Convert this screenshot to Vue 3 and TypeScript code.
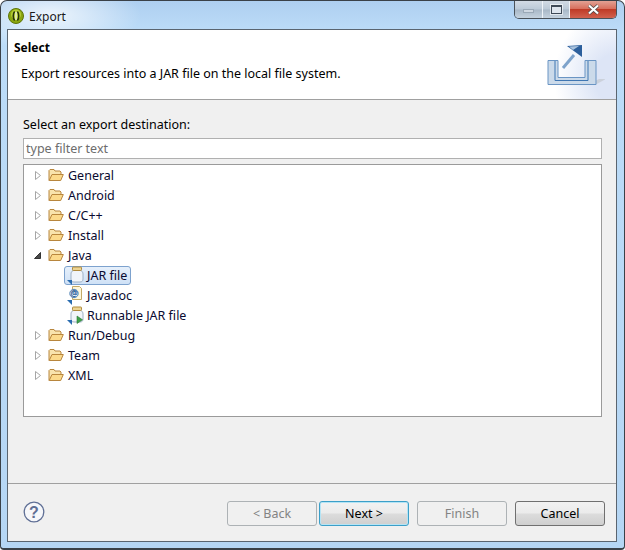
<template>
  <div class="window">
    <div class="titlebar">
      <div class="title">
        <svg class="app-icon" width="16" height="16" viewBox="0 0 16 16">
          <circle cx="8" cy="8" r="7.500" fill="#8aa60f" stroke="#5d7408" />
          <circle cx="8" cy="6.500" r="5" fill="#b5cc35" />
          <path d="M6.600 3.500C4.800 5.500 4.800 10.500 6.600 12.500M9.400 3.500C11.200 5.500 11.200 10.500 9.400 12.500" fill="none" stroke="#24300a" stroke-width="1.500" />
          <path d="M8 4v8" stroke="#f4f7d8" stroke-width="1.400" />
        </svg>
        <span>Export</span>
      </div>
      <div class="controls">
        <div class="ctl ctl-min"><span class="min-glyph"></span></div>
        <div class="ctl ctl-max"><span class="max-glyph"></span></div>
        <div class="ctl ctl-close">
          <svg width="13" height="11" viewBox="0 0 13 11">
            <path d="M2 1.500l9 8M11 1.500l-9 8" stroke="#4a4a4a" stroke-width="3.600" />
            <path d="M2 1.500l9 8M11 1.500l-9 8" stroke="#fff" stroke-width="2.200" />
          </svg>
        </div>
      </div>
    </div>

    <div class="client">
      <header class="banner">
        <div class="banner-text">
          <h1>Select</h1>
          <p>Export resources into a JAR file on the local file system.</p>
        </div>
        <div class="banner-art">
          <svg width="58" height="46" viewBox="0 0 58 46">
            <path d="M40 42l12-6h7l-11 6z" fill="#c3c9d0" opacity="0.7" />
            <path d="M1 17.500h10v17h27v-17h11v24H1z" fill="#cbdaea" stroke="#6a95c4" />
            <path d="M8 18v19.500h33V18" fill="none" stroke="#3f76b2" />
            <path d="M16 25L27 12" stroke="#7ea3cb" stroke-width="3" />
            <path d="M20 3l15-1v12z" fill="#2c5f9c" />
            <path d="M22 3.500l10-.5-6 4z" fill="#a9c3de" />
          </svg>
        </div>
      </header>

      <main class="body">
        <label class="dest-label">Select an export destination:</label>
        <input class="filter" type="text" placeholder="type filter text" />
        <ul class="tree">
          <li v-for="row in rows" :key="row.label" class="row" :class="{ child: row.kind !== 'folder' }">
            <template v-if="row.kind === 'folder'">
              <svg class="twisty" width="9" height="11" viewBox="0 0 9 11">
                <path v-if="row.open" d="M1.500 8.500h6v-6z" fill="#4a4a4a" stroke="#333" />
                <path v-else d="M2.500 1.500v8l5-4z" fill="#fff" stroke="#a6a6a6" />
              </svg>
              <svg class="icon folder" width="16" height="14" viewBox="0 0 16 14">
                <path d="M1 12.500V2.500l1-1h4l1 1.500h5l1 1v2" fill="#f8e3ad" stroke="#b8863e" />
                <path d="M1.200 12.500L4 6.500h11.300l-2.600 6z" fill="#fbd98b" stroke="#b8863e" />
              </svg>
              <span class="label">{{ row.label }}</span>
            </template>
            <div v-else class="item" :class="{ selected: row.selected }">
              <svg class="icon leaf" width="18" height="20" viewBox="0 0 18 20">
                <template v-if="row.kind === 'javadoc'">
                  <path d="M6.500 1.500h7l2 2v11h-9z" fill="#fdf7dc" stroke="#c4aa66" />
                  <circle cx="8" cy="8.500" r="4.200" fill="#eef5fb" stroke="#4a7fb5" />
                  <text x="8" y="11" class="at">@</text>
                </template>
                <template v-else>
                  <path d="M7 5.500c-1.500 1-2 2-2 3.500v5c0 2 1 3 3 3h6c2 0 3-1 3-3V9c0-1.500-.5-2.500-2-3.500z" fill="#f1f5fa" stroke="#9fb2c6" />
                  <rect x="6.500" y="2" width="9" height="3.500" rx="0.800" fill="#ecd492" stroke="#b08a3c" />
                  <path v-if="row.kind === 'runnable'" d="M11 11v7.500l5.500-3.700z" fill="#3da24a" stroke="#2d7a37" stroke-width="0.600" />
                </template>
                <path d="M1 15h5v5z" fill="#2a6cb0" />
              </svg>
              <span class="label">{{ row.label }}</span>
            </div>
          </li>
        </ul>
      </main>

      <footer class="footer">
        <svg class="help" width="22" height="22" viewBox="0 0 22 22">
          <circle cx="11" cy="11" r="9.800" fill="#f6f7fa" stroke="#5f6f95" stroke-width="1.300" />
          <text x="11" y="16.500" class="q">?</text>
        </svg>
        <div class="buttons">
          <button class="btn" disabled>&lt; Back</button>
          <button class="btn primary">Next &gt;</button>
          <button class="btn finish" disabled>Finish</button>
          <button class="btn cancel">Cancel</button>
        </div>
      </footer>
    </div>
  </div>
</template>

<script setup lang="ts">
interface Row {
  label: string
  kind: 'folder' | 'jar' | 'javadoc' | 'runnable'
  open?: boolean
  selected?: boolean
}

const rows: Row[] = [
  { label: 'General', kind: 'folder' },
  { label: 'Android', kind: 'folder' },
  { label: 'C/C++', kind: 'folder' },
  { label: 'Install', kind: 'folder' },
  { label: 'Java', kind: 'folder', open: true },
  { label: 'JAR file', kind: 'jar', selected: true },
  { label: 'Javadoc', kind: 'javadoc' },
  { label: 'Runnable JAR file', kind: 'runnable' },
  { label: 'Run/Debug', kind: 'folder' },
  { label: 'Team', kind: 'folder' },
  { label: 'XML', kind: 'folder' }
]
</script>

<style>
html,
body {
  margin: 0;
  background: #fff;
}
</style>

<style scoped>
.window {
  box-sizing: border-box;
  width: 625px;
  height: 550px;
  display: flex;
  flex-direction: column;
  padding: 0 7px 6px 6px;
  border: 1px solid #3a4148;
  border-bottom-width: 2px;
  border-radius: 7px 7px 4px 4px;
  background:
    radial-gradient(ellipse 90px 36px at 50px 14px, rgba(255, 255, 255, 0.75), rgba(255, 255, 255, 0) 100%),
    linear-gradient(180deg, #aecff0 0, #bcdcf8 30px, #b5d6f4 100%);
  font-family: "Noto Sans", sans-serif;
  font-size: 12.5px;
  color: #000;
  overflow: hidden;
}

.titlebar {
  height: 28px;
  flex: none;
  display: flex;
  justify-content: space-between;
  align-items: flex-start;
}

.title {
  display: flex;
  align-items: center;
  gap: 5px;
  height: 30px;
  padding-left: 1px;
  font-size: 12px;
  color: #1a1a1a;
}

.controls {
  display: flex;
  height: 19px;
  margin-top: -1px;
  border: 1px solid #4a525a;
  border-top: none;
  border-radius: 0 0 5px 5px;
  overflow: hidden;
  box-sizing: border-box;
}

.ctl {
  display: flex;
  align-items: center;
  justify-content: center;
  background: linear-gradient(180deg, #d5dde6 0, #bccad8 50%, #a9b8c7 55%, #c5d2de 100%);
}

.ctl-min {
  width: 27px;
  border-right: 1px solid #eef3f8;
}

.ctl-max {
  width: 26px;
  border-right: 1px solid #eef3f8;
}

.ctl-close {
  width: 46px;
  background: linear-gradient(180deg, #e4a89b 0, #d8705e 48%, #bf3a26 52%, #d2614e 100%);
}

.min-glyph {
  width: 11px;
  height: 4px;
  margin-top: 4px;
  background: #cfd8e2;
  border: 1px solid #9aa8b6;
  box-sizing: border-box;
}

.max-glyph {
  width: 11px;
  height: 9px;
  box-sizing: border-box;
  border: 1px solid #3f4a57;
  border-top-width: 2px;
  background: #dfe6ee;
  box-shadow: 0 0 0 1px rgba(255, 255, 255, 0.6);
}

.client {
  flex: 1;
  display: flex;
  flex-direction: column;
  min-height: 0;
  background: #f0f0f0;
  border: 1px solid #5a6570;
}

.banner {
  height: 70px;
  flex: none;
  box-sizing: border-box;
  display: flex;
  justify-content: space-between;
  background: #fff;
  border-bottom: 1px solid #a0a0a0;
}

.banner-text {
  padding: 10px 0 0 6px;
}

.banner-text h1 {
  margin: 0;
  font-size: 12px;
  line-height: 16px;
  font-weight: 700;
}

.banner-text p {
  margin: 10px 0 0 7px;
  line-height: 16px;
}

.banner-art {
  width: 78px;
  box-sizing: border-box;
  padding: 13px 0 0 9px;
  background: radial-gradient(ellipse 62px 70px at 100% 70%, #dde5f6 35%, #fff 100%);
}

.body {
  flex: 1;
  min-height: 0;
  display: flex;
  flex-direction: column;
  padding: 17px 14px 65px 15px;
}

.dest-label {
  line-height: 16px;
  height: 21px;
}

.filter {
  box-sizing: border-box;
  height: 21px;
  width: 100%;
  flex: none;
  margin: 0 0 5px;
  padding: 0 2px;
  border: 1px solid #b0b0b0;
  border-radius: 0;
  background: #fff;
  outline: none;
  font: inherit;
}

.filter::placeholder {
  color: #6d6d6d;
  opacity: 1;
}

.tree {
  box-sizing: border-box;
  height: 253px;
  flex: none;
  margin: 0;
  padding: 0;
  list-style: none;
  background: #fff;
  border: 1px solid #9a9a9a;
}

.row {
  height: 20px;
  display: flex;
  align-items: center;
  color: #0a0a30;
  padding-left: 9px;
}

.row.child {
  padding-left: 40px;
}

.twisty {
  flex: none;
  margin-right: 6px;
}

.folder {
  flex: none;
  margin-right: 4px;
}

.item {
  box-sizing: border-box;
  height: 19px;
  display: flex;
  align-items: center;
  padding: 0 3px 0 1px;
  border: 1px solid transparent;
}

.item.selected {
  border-color: #7da2ce;
  border-radius: 3px;
  background: linear-gradient(180deg, #e6f0fb, #cfe1f6);
}

.leaf {
  flex: none;
  margin-right: 3px;
}

.at {
  font-size: 8px;
  font-weight: 700;
  fill: #2a5f96;
  text-anchor: middle;
}

.footer {
  height: 58px;
  flex: none;
  box-sizing: border-box;
  border-top: 1px solid #a0a0a0;
  display: flex;
  align-items: flex-start;
  justify-content: space-between;
  padding: 17px 11px 0 15px;
}

.q {
  font-size: 16px;
  font-weight: 700;
  fill: #5f6f95;
  text-anchor: middle;
  font-family: "Liberation Sans", sans-serif;
}

.buttons {
  display: flex;
}

.btn {
  box-sizing: border-box;
  width: 90px;
  height: 25px;
  padding: 0;
  margin-left: 2px;
  border: 1px solid #707070;
  border-radius: 3px;
  background: linear-gradient(180deg, #f2f2f2 0, #ebebeb 48%, #dcdcdc 52%, #cfcfcf 100%);
  font: inherit;
  color: #000;
}

.btn:disabled {
  border-color: #adb2b5;
  background: #f0f0f0;
  color: #838383;
}

.btn.primary {
  border-color: #3c9fc8;
  box-shadow: inset 0 0 0 1px #b5e4f5;
}

.btn.finish,
.btn.cancel {
  margin-left: 8px;
}
</style>
